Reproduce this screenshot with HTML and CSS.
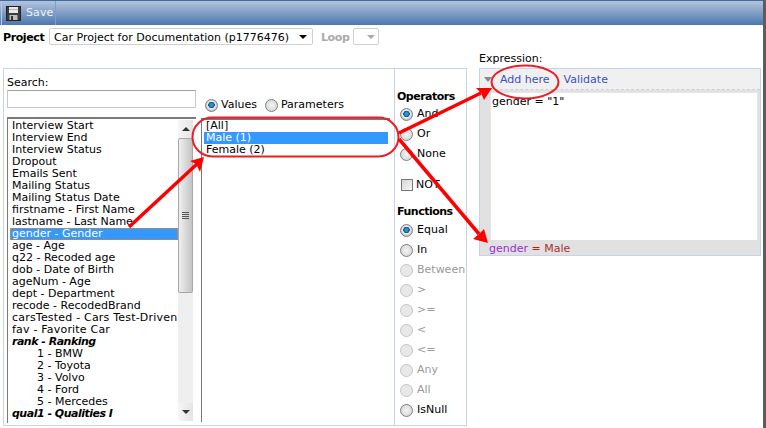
FILE: index.html
```html
<!DOCTYPE html>
<html lang="en">
<head>
<meta charset="utf-8">
<title>Expression builder</title>
<link rel="stylesheet" href="styles.css">
</head>
<body>
<div class="page">
  <div class="toolbar">
    <div class="save-btn">
      <svg class="disk" width="15" height="15" viewBox="0 0 15 15"><rect x="0.5" y="0.5" width="14" height="14" fill="#3c3c3c" stroke="#222"/><rect x="3" y="1" width="9" height="6" fill="#e8e8e8"/><rect x="3" y="3" width="9" height="1" fill="#b5b5b5"/><rect x="3.5" y="9" width="8" height="5" fill="#bdbdbd"/><rect x="5" y="10" width="2" height="4" fill="#333"/></svg>
      <span class="save-label">Save</span>
    </div>
  </div>
  <div class="project-row">
    <span class="field-label">Project</span>
    <div class="select select-project"><span class="select-text">Car Project for Documentation (p1776476)</span><span class="caret"></span></div>
    <span class="field-label muted">Loop</span>
    <div class="select select-loop"><span class="caret caret-muted"></span></div>
  </div>
  <div class="workspace">
    <div class="builder">
      <div class="selector">
        <div class="col-fields">
          <div class="search-label">Search:</div>
          <div class="search-box"></div>
          <div class="listbox fields-box">
            <div class="items">
              <div class="item">Interview Start</div>
              <div class="item">Interview End</div>
              <div class="item">Interview Status</div>
              <div class="item">Dropout</div>
              <div class="item">Emails Sent</div>
              <div class="item">Mailing Status</div>
              <div class="item">Mailing Status Date</div>
              <div class="item">firstname - First Name</div>
              <div class="item">lastname - Last Name</div>
              <div class="item active">gender - Gender</div>
              <div class="item">age - Age</div>
              <div class="item">q22 - Recoded age</div>
              <div class="item">dob - Date of Birth</div>
              <div class="item">ageNum - Age</div>
              <div class="item">dept - Department</div>
              <div class="item">recode - RecodedBrand</div>
              <div class="item wide">carsTested - Cars Test-Driven</div>
              <div class="item wide">fav - Favorite Car</div>
              <div class="item group">rank - Ranking</div>
              <div class="item sub">1 - BMW</div>
              <div class="item sub">2 - Toyota</div>
              <div class="item sub">3 - Volvo</div>
              <div class="item sub">4 - Ford</div>
              <div class="item sub">5 - Mercedes</div>
              <div class="item group">qual1 - Qualities I</div>
            </div>
            <div class="scrollbar">
              <div class="sb-btn"><span class="sb-up"></span></div>
              <div class="sb-thumb"><span class="sb-grip"></span></div>
              <div class="sb-track"></div>
              <div class="sb-btn"><span class="sb-down"></span></div>
            </div>
          </div>
        </div>
        <div class="col-values">
          <div class="tabs">
            <label class="opt"><span class="radio on"></span>Values</label>
            <label class="opt"><span class="radio"></span>Parameters</label>
          </div>
          <div class="listbox values-box">
            <div class="items">
              <div class="item">[All]</div>
              <div class="item selected">Male (1)</div>
              <div class="item">Female (2)</div>
            </div>
          </div>
        </div>
      </div>
      <div class="ops">
        <div class="ops-title">Operators</div>
        <div class="op"><span class="radio on"></span>And</div>
        <div class="op"><span class="radio"></span>Or</div>
        <div class="op"><span class="radio"></span>None</div>
        <div class="op op-not"><span class="check"></span>NOT</div>
        <div class="ops-title fn-title">Functions</div>
        <div class="op"><span class="radio on"></span>Equal</div>
        <div class="op"><span class="radio"></span>In</div>
        <div class="op off"><span class="radio"></span>Between</div>
        <div class="op off"><span class="radio"></span>&gt;</div>
        <div class="op off"><span class="radio"></span>&gt;=</div>
        <div class="op off"><span class="radio"></span>&lt;</div>
        <div class="op off"><span class="radio"></span>&lt;=</div>
        <div class="op off"><span class="radio"></span>Any</div>
        <div class="op off"><span class="radio"></span>All</div>
        <div class="op"><span class="radio"></span>IsNull</div>
      </div>
    </div>
    <div class="expression">
      <div class="expr-label">Expression:</div>
      <div class="expr-panel">
        <div class="expr-head">
          <span class="expr-tri"></span>
          <span class="expr-link">Add here</span>
          <span class="expr-link">Validate</span>
        </div>
        <div class="expr-body">
          <div class="expr-text">gender = "1"</div>
        </div>
        <div class="expr-foot"><span class="tok-field">gender</span> <span class="tok-op">=</span> <span class="tok-val">Male</span></div>
      </div>
    </div>
  </div>
</div>
<svg class="annotations" width="766" height="428" viewBox="0 0 766 428">
  <g fill="none" stroke="#ee1c25" stroke-width="2">
    <rect x="192.500" y="117.500" width="206" height="39" rx="20" ry="19.500"/>
    <ellipse cx="525" cy="82" rx="33.500" ry="16.500"/>
  </g>
  <g fill="none" stroke="#ff0000" stroke-width="3.500">
    <line x1="129" y1="227" x2="197" y2="164"/>
    <line x1="399" y1="133" x2="481" y2="93"/>
    <line x1="399" y1="139" x2="479" y2="234"/>
  </g>
  <g fill="#ff0000">
    <polygon points="204,157 200,172 196,164 190,161"/>
    <polygon points="492,88 484,100 481,93 476,88"/>
    <polygon points="488,243 473,239 479,234 484,229"/>
  </g>
</svg>
</body>
</html>
```
FILE: styles.css
```css
html, body { margin: 0; padding: 0; background: #fff; }
body { width: 766px; height: 428px; overflow: hidden; position: relative; font: 11px/12px "DejaVu Sans", Verdana, sans-serif; color: #000; }
.page { width: 763px; height: 428px; border-right: 3px solid #808080; border-image: linear-gradient(90deg, #c4c4c4, #a0a0a0 50%, #5c5c5c) 1; display: flex; flex-direction: column; }

.toolbar { height: 24px; flex: none; border-top: 1px solid #3d6ba6; background: linear-gradient(#b4c3dc, #4a78ae); display: flex; padding-left: 1px; }
.save-btn { display: flex; align-items: center; gap: 5px; width: 55px; padding-left: 4px; box-sizing: border-box; border-left: 1px solid #b9cbe2; border-right: 1px solid #7f9fc6; }
.disk { flex: none; }
.save-label { color: #eef3fa; letter-spacing: 0.1px; }

.project-row { height: 27px; flex: none; display: flex; align-items: center; padding-left: 3px; box-sizing: border-box; padding-top: 2px; padding-bottom: 6px; }
.field-label { font-weight: bold; width: 46px; flex: none; letter-spacing: -0.4px; padding-top: 2px; }
.field-label.muted { color: #aaa; width: 32px; margin-left: 8px; }
.select { height: 17px; box-sizing: border-box; border: 1px solid #d0d0d0; border-radius: 2px; display: flex; align-items: center; background: #fff; }
.select-project { width: 264px; padding-left: 4px; }
.select-text { flex: 1; white-space: nowrap; padding-top: 2px; }
.select-loop { width: 26px; }
.caret { width: 0; height: 0; border-left: 4px solid transparent; border-right: 4px solid transparent; border-top: 4px solid #000; margin-right: 5px; }
.caret-muted { border-top-color: #aaa; margin: 0 0 0 13px; }

.workspace { flex: 1; display: flex; align-items: flex-start; min-height: 0; }
.builder { display: flex; margin: 16px 0 0 3px; height: 358px; flex: none; }
.selector { width: 391px; box-sizing: border-box; border: 1px solid #c5d4ea; border-right: 0; display: flex; padding: 0 0 0 3px; gap: 5px; }
.col-fields { width: 189px; flex: none; display: flex; flex-direction: column; padding-top: 8px; }
.search-label { height: 13px; }
.search-box { width: 189px; height: 18px; box-sizing: border-box; border: 1px solid #c8c8c8; border-top-color: #a0a0a0; border-radius: 1px; margin-bottom: 9px; background: #fff; }
.listbox { display: flex; box-sizing: border-box; border-top: 2px solid #7a7a7a; border-left: 1px solid #7a7a7a; background: #fff; overflow: hidden; }
.fields-box { height: 306px; }
.items { flex: 1; min-width: 0; padding: 1px 0 0 2px; }
.item { height: 12px; padding-left: 2px; white-space: nowrap; overflow: hidden; }
.item.active { background: #3399ff; color: #fff; box-sizing: border-box; border: 1px dotted #f08010; padding-left: 1px; line-height: 10px; }
.item.selected { background: #3399ff; color: #fff; margin-right: 2px; }
.item.group { font-weight: bold; font-style: italic; letter-spacing: -0.5px; }
.item.sub { padding-left: 27px; }
.item.wide { letter-spacing: 0.2px; }

.scrollbar { width: 15px; flex: none; margin-right: 3px; display: flex; flex-direction: column; background: #efefef; margin-top: 1px; margin-bottom: 2px; }
.sb-btn { height: 18px; display: flex; align-items: center; justify-content: center; background: linear-gradient(90deg, #f6f6f6, #e4e4e4); flex: none; }
.sb-up { border-left: 4px solid transparent; border-right: 4px solid transparent; border-bottom: 4px solid #333; }
.sb-down { border-left: 4px solid transparent; border-right: 4px solid transparent; border-top: 4px solid #333; }
.sb-thumb { height: 155px; flex: none; box-sizing: border-box; border: 1px solid #a8a8a8; border-radius: 2px; background: linear-gradient(90deg, #efefef, #c4c4c4); display: flex; align-items: center; justify-content: center; }
.sb-grip { width: 7px; height: 7px; background: repeating-linear-gradient(#555 0 1px, transparent 1px 2px); }
.sb-track { flex: 1; }

.col-values { flex: 1; min-width: 0; display: flex; flex-direction: column; padding-top: 29px; }
.tabs { height: 20px; display: flex; gap: 8px; padding-left: 4px; align-items: flex-start; }
.opt { display: flex; align-items: center; gap: 3px; height: 14px; }
.values-box { width: 189px; height: 304px; }
.values-box .items { padding-top: 0; }

.radio { display: inline-block; width: 13px; height: 13px; flex: none; box-sizing: border-box; border-radius: 50%; border: 1px solid #808080; background: radial-gradient(circle at 50% 50%, #f4f4f4, #cfcfcf); }
.radio.on { background: radial-gradient(circle at 50% 45%, #2a93d0 0 1.500px, #0b4f80 3px, #f2f2f2 3.500px, #c8c8c8 5.500px); }
.check { display: inline-block; width: 12px; height: 12px; flex: none; box-sizing: border-box; border: 1px solid #777; background: linear-gradient(135deg, #d6d6d6, #f6f6f6); }

.ops { width: 73px; box-sizing: border-box; border: 1px solid #c5d4ea; padding: 21px 0 0 2px; }
.ops-title { font-weight: bold; height: 14px; line-height: 14px; letter-spacing: -0.5px; }
.fn-title { margin-top: 5px; height: 15px; }
.op { height: 20px; display: flex; align-items: center; gap: 4px; padding-left: 3px; }
.op-not { height: 36px; padding: 6px 0 0 4px; gap: 3px; box-sizing: border-box; }
.op.off { color: #999; }
.op.off .radio { border-color: #c4c4c4; background: #e8e8e8; }

.expression { width: 282px; margin-left: 12px; flex: none; }
.expr-label { height: 16px; line-height: 13px; }
.expr-panel { height: 188px; box-sizing: border-box; border: 1px solid #c5d4ea; background: #e1e1e1; display: flex; flex-direction: column; }
.expr-head { height: 20px; flex: none; box-sizing: content-box; background: #f0f0f0; border-bottom: 1px dashed #c8d2de; display: flex; align-items: center; padding-left: 4px; }
.expr-tri { width: 0; height: 0; border-left: 4px solid transparent; border-right: 4px solid transparent; border-top: 5px solid #888; margin-right: 8px; }
.expr-link { color: #3b4fc4; margin-right: 14px; padding-top: 2px; }
.expr-body { flex: 1; margin: 2px 2px 0 10px; background: #fff; border: 1px solid #e6e6e6; border-bottom: 0; padding: 3px 0 0 1px; }
.expr-foot { height: 15px; line-height: 18px; padding-left: 9px; flex: none; }
.tok-field { color: #9a30d8; }
.tok-op { color: #e01010; }
.tok-val { color: #a83232; }

.annotations { position: absolute; left: 0; top: 0; pointer-events: none; }
```
